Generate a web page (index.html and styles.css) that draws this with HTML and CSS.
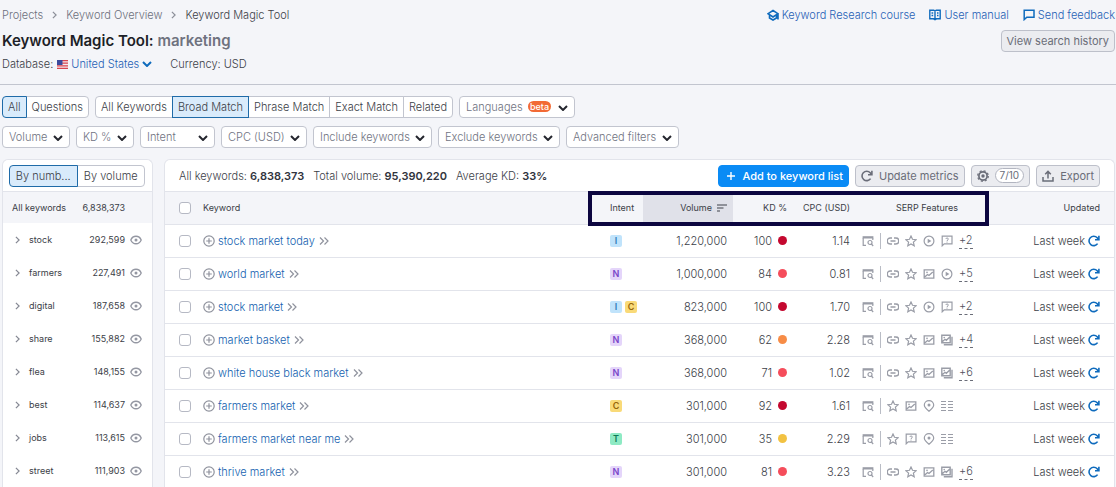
FILE: index.html
```html
<!DOCTYPE html>
<html lang="en">
    <head>
        <meta charset="utf-8">
        <title>Keyword Magic Tool</title>
        <link rel="stylesheet" href="styles.css">
    </head>
    <body>
        <!-- icon sprite -->
        <svg class="sprite" aria-hidden="true">
            <symbol id="i-right" viewBox="0 0 6 10"><path d="M1 1l4 4-4 4" fill="none" stroke="currentColor" stroke-width="1.5"/></symbol>
            <symbol id="i-down" viewBox="0 0 10 6"><path d="M1 1l4 4 4-4" fill="none" stroke="currentColor" stroke-width="2"/></symbol>
            <symbol id="i-double" viewBox="0 0 10 8"><path d="M1 .5L4.500 4 1 7.500M5.500.5L9 4 5.500 7.500" fill="none" stroke="currentColor" stroke-width="1.200"/></symbol>
            <symbol id="i-course" viewBox="0 0 12 12"><path d="M6 1.500L11 4.700 6 8 1 4.700zM2.500 6v3L6 11l3.500-2V6M11 5v5.500" fill="none" stroke="currentColor" stroke-width="1.600"/></symbol>
            <symbol id="i-book" viewBox="0 0 12 12"><path d="M.8 1.200h4L6 2l1.200-.8h4v8.600H7.500L6 10.700 4.500 9.800H.8zM6 2v8.500M2.500 4h1.700M2.500 6.500h1.700M8 4h1.500M8 6.500h1.500" fill="none" stroke="currentColor" stroke-width="1.400"/></symbol>
            <symbol id="i-chat" viewBox="0 0 12 12"><path d="M1.200 10.600V1.200h9.800v7H3.800z" fill="none" stroke="currentColor" stroke-width="1.500"/></symbol>
            <symbol id="i-reload" viewBox="0 0 12 12"><path d="M9.600 8.600A4.700 4.700 0 1 1 9.200 2.800L10.500 4.400M10.900.8v4H7" fill="none" stroke="currentColor" stroke-width="1.600"/></symbol>
            <symbol id="i-gear" viewBox="0 0 12 12"><circle cx="6" cy="6" r="4.100" fill="none" stroke="currentColor" stroke-width="1.700"/><circle cx="6" cy="6" r="5.300" fill="none" stroke="currentColor" stroke-width="1.200" stroke-dasharray="2.100 2.060"/><circle cx="6" cy="6" r="1.700" fill="currentColor"/></symbol>
            <symbol id="i-export" viewBox="0 0 12 12"><path d="M1 7v4h10V7M6 8.500V1.500M3.200 4.200L6 1.400l2.800 2.800" fill="none" stroke="currentColor" stroke-width="1.500"/></symbol>
            <symbol id="i-plus" viewBox="0 0 8 8"><path d="M4 0v8M0 4h8" stroke="currentColor" stroke-width="1.400"/></symbol>
            <symbol id="i-add" viewBox="0 0 12 12"><circle cx="6" cy="6" r="5.200" fill="none" stroke="currentColor" stroke-width="1.200"/><path d="M6 3.200v5.600M3.200 6h5.600" stroke="currentColor" stroke-width="1.200"/></symbol>
            <symbol id="i-eye" viewBox="0 0 12 10"><path d="M.8 5C2.800 0 9.200 0 11.200 5 9.200 10 2.800 10 .8 5z" fill="none" stroke="currentColor" stroke-width="1.300"/><circle cx="6" cy="5" r="1.500" fill="currentColor"/></symbol>
            <symbol id="i-sort" viewBox="0 0 10 8"><path d="M0 1h10M0 4h6.500M0 7h3" stroke="currentColor" stroke-width="1.500"/></symbol>
            <symbol id="i-serp" viewBox="0 0 12 12"><path d="M.6 1.200h10.800v2.300H.6z" fill="currentColor"/><path d="M1.200 3v7.300H4M10.800 3v2" fill="none" stroke="currentColor" stroke-width="1.200"/><circle cx="8" cy="7.500" r="2" fill="none" stroke="currentColor" stroke-width="1.200"/><path d="M9.400 9l1.800 2" stroke="currentColor" stroke-width="1.200"/></symbol>
            <symbol id="i-link" viewBox="0 0 12 12"><path d="M5 3H3.200a3 3 0 0 0 0 6H5M7 3h1.800a3 3 0 0 1 0 6H7M3.500 6h5" fill="none" stroke="currentColor" stroke-width="1.400"/></symbol>
            <symbol id="i-star" viewBox="0 0 12 12"><path d="M6 1l1.500 3.300 3.600.4-2.700 2.400.8 3.600L6 8.900l-3.200 1.800.8-3.600L.9 4.700l3.600-.4z" fill="none" stroke="currentColor" stroke-width="1.200"/></symbol>
            <symbol id="i-video" viewBox="0 0 12 12"><circle cx="6" cy="6" r="4.900" fill="none" stroke="currentColor" stroke-width="1.200"/><path d="M4.700 3.700L8.400 6 4.700 8.300z" fill="currentColor"/></symbol>
            <symbol id="i-faq" viewBox="0 0 12 12"><path d="M1.200 10.800V1.200h9.800v7.600H3.200z" fill="none" stroke="currentColor" stroke-width="1.200"/><path d="M4.800 4c0-1.300 2.600-1.300 2.600 0C7.400 5 6 4.900 6 6M6 6.600v1" fill="none" stroke="currentColor"/></symbol>
            <symbol id="i-image" viewBox="0 0 12 12"><path d="M1.200 1.800h9.600v8.400H1.200zM2 8.800l2.500-2.300 1.500 1L9.800 4" fill="none" stroke="currentColor" stroke-width="1.300"/><circle cx="4" cy="4.400" r=".8" fill="currentColor"/></symbol>
            <symbol id="i-images" viewBox="0 0 12 12"><path d="M.8 1.200h8.400v7.600H.8zM1.500 7.500L4 5.300l1.300 1L8.800 3M11 2.800v8H2.800" fill="none" stroke="currentColor" stroke-width="1.400"/><circle cx="3.200" cy="3.600" r=".8" fill="currentColor"/></symbol>
            <symbol id="i-pin" viewBox="0 0 12 12"><path d="M6 11.300C3 9 1.300 7.300 1.300 5.100a4.700 4.500 0 0 1 9.400 0C10.700 7.300 9 9 6 11.300z" fill="none" stroke="currentColor" stroke-width="1.200"/><circle cx="6" cy="5" r="1.500" fill="currentColor"/></symbol>
            <symbol id="i-list" viewBox="0 0 12 12"><path d="M0 1.500h5M7 1.500h5M0 4.500h5M7 4.500h5M0 7.500h5M7 7.500h5M0 10.500h5M7 10.500h5" stroke="currentColor" stroke-width="1.200"/></symbol>
            <symbol id="i-flag" viewBox="0 0 11 9"><path fill="#f4e9ee" d="M0 0h11v9H0z"/><path d="M0 .6h11M0 3.200h11M0 5.800h11M0 8.400h11" stroke="#d8434f" stroke-width="1.300"/><path fill="#3c4a9c" d="M0 0h5.500v5H0z"/></symbol>
        </svg>

        <header class="page-header">
            <div class="header-left">
                <nav class="breadcrumbs">
                    <a href="#">Projects</a>
                    <svg class="crumb-arrow"><use href="#i-right"/></svg>
                    <a href="#">Keyword Overview</a>
                    <svg class="crumb-arrow"><use href="#i-right"/></svg>
                    <span class="current">Keyword Magic Tool</span>
                </nav>
                <h1>Keyword Magic Tool: <span>marketing</span></h1>
                <div class="settings">
                    <span>Database:</span>
                    <button class="country"><svg class="flag"><use href="#i-flag"/></svg>United States<svg class="chevron"><use href="#i-down"/></svg></button>
                    <span class="currency">Currency: USD</span>
                </div>
            </div>
            <div class="header-right">
                <div class="help-links">
                    <a href="#"><svg class="icon"><use href="#i-course"/></svg>Keyword Research course</a>
                    <a href="#"><svg class="icon"><use href="#i-book"/></svg>User manual</a>
                    <a href="#"><svg class="icon"><use href="#i-chat"/></svg>Send feedback</a>
                </div>
                <button class="btn history-btn">View search history</button>
            </div>
        </header>

        <section class="filters">
            <div class="filter-row">
                <div class="segmented">
                    <button class="active">All</button>
                    <button>Questions</button>
                </div>
                <div class="segmented">
                    <button>All Keywords</button>
                    <button class="active">Broad Match</button>
                    <button>Phrase Match</button>
                    <button>Exact Match</button>
                    <button>Related</button>
                </div>
                <div class="select languages">
                    <select aria-label="Languages"><option>Languages</option></select>
                    <span class="beta">beta</span>
                    <svg class="chevron"><use href="#i-down"/></svg>
                </div>
            </div>
            <div class="filter-row">
                <div class="select"><select aria-label="Volume"><option>Volume</option></select><svg class="chevron"><use href="#i-down"/></svg></div>
                <div class="select"><select aria-label="KD %"><option>KD %</option></select><svg class="chevron"><use href="#i-down"/></svg></div>
                <div class="select intent-filter"><select aria-label="Intent"><option>Intent</option></select><svg class="chevron"><use href="#i-down"/></svg></div>
                <div class="select"><select aria-label="CPC (USD)"><option>CPC (USD)</option></select><svg class="chevron"><use href="#i-down"/></svg></div>
                <div class="select"><select aria-label="Include keywords"><option>Include keywords</option></select><svg class="chevron"><use href="#i-down"/></svg></div>
                <div class="select"><select aria-label="Exclude keywords"><option>Exclude keywords</option></select><svg class="chevron"><use href="#i-down"/></svg></div>
                <div class="select"><select aria-label="Advanced filters"><option>Advanced filters</option></select><svg class="chevron"><use href="#i-down"/></svg></div>
            </div>
        </section>

        <main class="content">
            <aside class="panel groups">
                <div class="panel-head">
                    <div class="segmented">
                        <button class="active">By numb...</button>
                        <button>By volume</button>
                    </div>
                </div>
                <div class="group-total"><span>All keywords</span><span>6,838,373</span></div>
                <ul>
                    <li><svg class="arrow"><use href="#i-right"/></svg><span>stock</span><span>292,599</span><svg class="eye"><use href="#i-eye"/></svg></li>
                    <li><svg class="arrow"><use href="#i-right"/></svg><span>farmers</span><span>227,491</span><svg class="eye"><use href="#i-eye"/></svg></li>
                    <li><svg class="arrow"><use href="#i-right"/></svg><span>digital</span><span>187,658</span><svg class="eye"><use href="#i-eye"/></svg></li>
                    <li><svg class="arrow"><use href="#i-right"/></svg><span>share</span><span>155,882</span><svg class="eye"><use href="#i-eye"/></svg></li>
                    <li><svg class="arrow"><use href="#i-right"/></svg><span>flea</span><span>148,155</span><svg class="eye"><use href="#i-eye"/></svg></li>
                    <li><svg class="arrow"><use href="#i-right"/></svg><span>best</span><span>114,637</span><svg class="eye"><use href="#i-eye"/></svg></li>
                    <li><svg class="arrow"><use href="#i-right"/></svg><span>jobs</span><span>113,615</span><svg class="eye"><use href="#i-eye"/></svg></li>
                    <li><svg class="arrow"><use href="#i-right"/></svg><span>street</span><span>111,903</span><svg class="eye"><use href="#i-eye"/></svg></li>
                </ul>
            </aside>

            <section class="panel results">
                <div class="panel-head">
                    <div class="totals">
                        <span>All keywords: <b>6,838,373</b></span>
                        <span>Total volume: <b>95,390,220</b></span>
                        <span>Average KD: <b>33%</b></span>
                    </div>
                    <div class="actions">
                        <button class="btn primary"><svg class="plus"><use href="#i-plus"/></svg>Add to keyword list</button>
                        <button class="btn"><svg class="icon"><use href="#i-reload"/></svg>Update metrics</button>
                        <button class="btn" aria-label="Columns"><svg class="icon"><use href="#i-gear"/></svg><span class="count">7/10</span></button>
                        <button class="btn"><svg class="icon"><use href="#i-export"/></svg>Export</button>
                    </div>
                </div>
                <div class="table-wrapper">
                    <table>
                        <thead>
                            <tr>
                                <th class="check"><input type="checkbox" aria-label="Select all"></th>
                                <th class="keyword">Keyword</th>
                                <th class="intent">Intent</th>
                                <th class="volume">Volume<svg class="sort"><use href="#i-sort"/></svg></th>
                                <th class="kd">KD %</th>
                                <th class="cpc">CPC (USD)</th>
                                <th class="serp">SERP Features</th>
                                <th class="updated">Updated</th>
                            </tr>
                        </thead>
                        <tbody>
                            <tr>
                                <td class="check"><input type="checkbox" aria-label="stock market today"></td>
                                <td class="keyword"><div><svg class="icon"><use href="#i-add"/></svg><a href="#">stock market today</a><svg class="double"><use href="#i-double"/></svg></div></td>
                                <td class="intent"><div><span class="tag i">I</span></div></td>
                                <td class="volume">1,220,000</td>
                                <td class="kd"><div>100<i class="dot very-hard"></i></div></td>
                                <td class="cpc">1.14</td>
                                <td class="serp"><div><svg class="icon"><use href="#i-serp"/></svg><i class="divider"></i><svg class="icon"><use href="#i-link"/></svg><svg class="icon"><use href="#i-star"/></svg><svg class="icon"><use href="#i-video"/></svg><svg class="icon"><use href="#i-faq"/></svg><span class="more">+2</span></div></td>
                                <td class="updated"><div>Last week<svg class="icon"><use href="#i-reload"/></svg></div></td>
                            </tr>
                            <tr>
                                <td class="check"><input type="checkbox" aria-label="world market"></td>
                                <td class="keyword"><div><svg class="icon"><use href="#i-add"/></svg><a href="#">world market</a><svg class="double"><use href="#i-double"/></svg></div></td>
                                <td class="intent"><div><span class="tag n">N</span></div></td>
                                <td class="volume">1,000,000</td>
                                <td class="kd"><div>84<i class="dot hard"></i></div></td>
                                <td class="cpc">0.81</td>
                                <td class="serp"><div><svg class="icon"><use href="#i-serp"/></svg><i class="divider"></i><svg class="icon"><use href="#i-link"/></svg><svg class="icon"><use href="#i-star"/></svg><svg class="icon"><use href="#i-image"/></svg><svg class="icon"><use href="#i-video"/></svg><span class="more">+5</span></div></td>
                                <td class="updated"><div>Last week<svg class="icon"><use href="#i-reload"/></svg></div></td>
                            </tr>
                            <tr>
                                <td class="check"><input type="checkbox" aria-label="stock market"></td>
                                <td class="keyword"><div><svg class="icon"><use href="#i-add"/></svg><a href="#">stock market</a><svg class="double"><use href="#i-double"/></svg></div></td>
                                <td class="intent"><div><span class="tag i">I</span><span class="tag c">C</span></div></td>
                                <td class="volume">823,000</td>
                                <td class="kd"><div>100<i class="dot very-hard"></i></div></td>
                                <td class="cpc">1.70</td>
                                <td class="serp"><div><svg class="icon"><use href="#i-serp"/></svg><i class="divider"></i><svg class="icon"><use href="#i-link"/></svg><svg class="icon"><use href="#i-star"/></svg><svg class="icon"><use href="#i-video"/></svg><svg class="icon"><use href="#i-faq"/></svg><span class="more">+2</span></div></td>
                                <td class="updated"><div>Last week<svg class="icon"><use href="#i-reload"/></svg></div></td>
                            </tr>
                            <tr>
                                <td class="check"><input type="checkbox" aria-label="market basket"></td>
                                <td class="keyword"><div><svg class="icon"><use href="#i-add"/></svg><a href="#">market basket</a><svg class="double"><use href="#i-double"/></svg></div></td>
                                <td class="intent"><div><span class="tag n">N</span></div></td>
                                <td class="volume">368,000</td>
                                <td class="kd"><div>62<i class="dot difficult"></i></div></td>
                                <td class="cpc">2.28</td>
                                <td class="serp"><div><svg class="icon"><use href="#i-serp"/></svg><i class="divider"></i><svg class="icon"><use href="#i-link"/></svg><svg class="icon"><use href="#i-star"/></svg><svg class="icon"><use href="#i-image"/></svg><svg class="icon"><use href="#i-images"/></svg><span class="more">+4</span></div></td>
                                <td class="updated"><div>Last week<svg class="icon"><use href="#i-reload"/></svg></div></td>
                            </tr>
                            <tr>
                                <td class="check"><input type="checkbox" aria-label="white house black market"></td>
                                <td class="keyword"><div><svg class="icon"><use href="#i-add"/></svg><a href="#">white house black market</a><svg class="double"><use href="#i-double"/></svg></div></td>
                                <td class="intent"><div><span class="tag n">N</span></div></td>
                                <td class="volume">368,000</td>
                                <td class="kd"><div>71<i class="dot hard"></i></div></td>
                                <td class="cpc">1.02</td>
                                <td class="serp"><div><svg class="icon"><use href="#i-serp"/></svg><i class="divider"></i><svg class="icon"><use href="#i-link"/></svg><svg class="icon"><use href="#i-star"/></svg><svg class="icon"><use href="#i-image"/></svg><svg class="icon"><use href="#i-images"/></svg><span class="more">+6</span></div></td>
                                <td class="updated"><div>Last week<svg class="icon"><use href="#i-reload"/></svg></div></td>
                            </tr>
                            <tr>
                                <td class="check"><input type="checkbox" aria-label="farmers market"></td>
                                <td class="keyword"><div><svg class="icon"><use href="#i-add"/></svg><a href="#">farmers market</a><svg class="double"><use href="#i-double"/></svg></div></td>
                                <td class="intent"><div><span class="tag c">C</span></div></td>
                                <td class="volume">301,000</td>
                                <td class="kd"><div>92<i class="dot very-hard"></i></div></td>
                                <td class="cpc">1.61</td>
                                <td class="serp"><div><svg class="icon"><use href="#i-serp"/></svg><i class="divider"></i><svg class="icon"><use href="#i-star"/></svg><svg class="icon"><use href="#i-image"/></svg><svg class="icon"><use href="#i-pin"/></svg><svg class="icon"><use href="#i-list"/></svg></div></td>
                                <td class="updated"><div>Last week<svg class="icon"><use href="#i-reload"/></svg></div></td>
                            </tr>
                            <tr>
                                <td class="check"><input type="checkbox" aria-label="farmers market near me"></td>
                                <td class="keyword"><div><svg class="icon"><use href="#i-add"/></svg><a href="#">farmers market near me</a><svg class="double"><use href="#i-double"/></svg></div></td>
                                <td class="intent"><div><span class="tag t">T</span></div></td>
                                <td class="volume">301,000</td>
                                <td class="kd"><div>35<i class="dot possible"></i></div></td>
                                <td class="cpc">2.29</td>
                                <td class="serp"><div><svg class="icon"><use href="#i-serp"/></svg><i class="divider"></i><svg class="icon"><use href="#i-star"/></svg><svg class="icon"><use href="#i-faq"/></svg><svg class="icon"><use href="#i-pin"/></svg><svg class="icon"><use href="#i-list"/></svg></div></td>
                                <td class="updated"><div>Last week<svg class="icon"><use href="#i-reload"/></svg></div></td>
                            </tr>
                            <tr>
                                <td class="check"><input type="checkbox" aria-label="thrive market"></td>
                                <td class="keyword"><div><svg class="icon"><use href="#i-add"/></svg><a href="#">thrive market</a><svg class="double"><use href="#i-double"/></svg></div></td>
                                <td class="intent"><div><span class="tag n">N</span></div></td>
                                <td class="volume">301,000</td>
                                <td class="kd"><div>81<i class="dot hard"></i></div></td>
                                <td class="cpc">3.23</td>
                                <td class="serp"><div><svg class="icon"><use href="#i-serp"/></svg><i class="divider"></i><svg class="icon"><use href="#i-link"/></svg><svg class="icon"><use href="#i-star"/></svg><svg class="icon"><use href="#i-image"/></svg><svg class="icon"><use href="#i-images"/></svg><span class="more">+6</span></div></td>
                                <td class="updated"><div>Last week<svg class="icon"><use href="#i-reload"/></svg></div></td>
                            </tr>
                        </tbody>
                    </table>
                    <!-- frame over the metric column headings -->
                    <div class="highlight"></div>
                </div>
            </section>
        </main>
    </body>
</html>
```
FILE: styles.css
```css
* {
    box-sizing: border-box;
}

body {
    margin: 0;
    font: 300 11px/16px Inter, "Liberation Sans", sans-serif;
    color: #3b3e47;
    background-color: #f4f5f9;
}

button, select {
    margin: 0;
    font: inherit;
    color: inherit;
    cursor: pointer;
}

a {
    text-decoration: none;
}

svg {
    display: block;
    flex: none;
}

.sprite {
    position: absolute;
    width: 0;
    height: 0;
}

.icon {
    width: 12px;
    height: 12px;
}

.chevron {
    width: 10px;
    height: 6px;
}

/* header */
.page-header {
    display: flex;
    justify-content: space-between;
    padding: 7px 1px 12px 2px;
    border-bottom: 1px solid #c2c5cf;
}

.breadcrumbs {
    display: flex;
    align-items: center;
    gap: 9px;
}

.breadcrumbs a {
    color: #6c707c;
}

.crumb-arrow {
    width: 5px;
    height: 8px;
    color: #8b8e98;
}

h1 {
    margin: 8px 0 5px;
    font-size: 15px;
    line-height: 20px;
    font-weight: 600;
    color: #1d1f27;
}

h1 span {
    color: #6f727f;
}

.settings {
    display: flex;
    align-items: center;
    gap: 4px;
}

.country {
    display: flex;
    align-items: center;
    gap: 3px;
    padding: 0;
    border: none;
    color: #1f5fb5;
    background: none;
}

.country .chevron {
    color: #0f6bbd;
}

.flag {
    width: 11px;
    height: 9px;
}

.currency {
    margin-left: 14px;
}

.header-right {
    display: flex;
    flex-direction: column;
    align-items: flex-end;
    gap: 7px;
}

.help-links {
    display: flex;
    gap: 14px;
}

.help-links a {
    display: flex;
    align-items: center;
    gap: 3px;
    color: #1f5fb5;
}

.help-links svg {
    color: #0f6bbd;
}

.btn {
    display: flex;
    align-items: center;
    gap: 6px;
    height: 22px;
    padding: 0 5px;
    border: 1px solid #bdc0ca;
    border-radius: 4px;
    color: #6a6d78;
    background-color: #ebecf0;
    font-weight: 400;
    white-space: nowrap;
}

.btn:hover {
    background-color: #e0e2e8;
}

.btn.primary {
    padding: 0 5px 0 8px;
    gap: 7px;
    border-color: #0a8bf5;
    color: white;
    background-color: #0a8bf5;
    font-weight: 500;
}

/* filters */
.filters {
    display: flex;
    flex-direction: column;
    gap: 8px;
    padding: 11px 2px;
}

.filter-row {
    display: flex;
    flex-wrap: wrap;
    gap: 6px;
}

.segmented {
    display: flex;
}

.segmented button {
    height: 22px;
    padding: 0 5px;
    border: 1px solid #c2c5cf;
    margin-left: -1px;
    background-color: white;
    white-space: nowrap;
}

.segmented button:first-child {
    margin-left: 0;
    border-radius: 4px 0 0 4px;
}

.segmented button:last-child {
    border-radius: 0 4px 4px 0;
}

.segmented .active {
    position: relative;
    border-color: #1f6ba8;
    background-color: #d9ebfb;
}

.select {
    position: relative;
}

.select select {
    appearance: none;
    width: 100%;
    height: 22px;
    padding: 0 21px 0 6px;
    border: 1px solid #c2c5cf;
    border-radius: 4px;
    color: #6f737f;
    background-color: white;
}

.select .chevron {
    position: absolute;
    right: 7px;
    top: 9px;
    color: #24262e;
    pointer-events: none;
}

.intent-filter {
    width: 75px;
}

.languages select {
    padding-right: 51px;
}

.beta {
    position: absolute;
    right: 24px;
    top: 5px;
    padding: 0 2px;
    border-radius: 6px;
    font-size: 9px;
    line-height: 11px;
    font-weight: 500;
    color: white;
    background-color: #f26a35;
    pointer-events: none;
}

/* panels */
.content {
    display: flex;
    align-items: stretch;
    gap: 11px;
    padding: 0 1px 0 2px;
}

.panel {
    border: 1px solid #e2e4eb;
    border-bottom: none;
    border-radius: 6px 6px 0 0;
    background-color: white;
}

.panel-head {
    display: flex;
    align-items: center;
    justify-content: space-between;
    height: 32px;
    border-bottom: 1px solid #e2e4eb;
}

.groups {
    flex: none;
    width: 151px;
    font-size: 9px;
}

.groups .panel-head {
    padding: 0 7px 0 6px;
    font-size: 11px;
}

.groups .segmented,
.groups .segmented button {
    flex: 1;
}

.group-total {
    display: flex;
    justify-content: space-between;
    align-items: center;
    height: 31px;
    padding: 0 27px 0 9px;
    background-color: #f4f5f9;
    font-weight: 400;
}

.groups ul {
    margin: 0;
    padding: 0;
    list-style: none;
    font-weight: 400;
}

.groups li {
    display: grid;
    grid-template-columns: 5px 1fr auto 12px;
    align-items: center;
    column-gap: 5px;
    height: 33px;
    padding: 0 10px 0 12px;
}

.groups li span:nth-child(2) {
    margin-left: 4px;
}

.arrow {
    width: 5px;
    height: 8px;
    color: #858893;
}

.eye {
    width: 12px;
    height: 10px;
    color: #9497a2;
}

.results {
    flex: 1;
    min-width: 0;
}

.results .panel-head {
    padding: 0 14px;
}

.totals {
    display: flex;
    gap: 9px;
}

.totals b {
    font-weight: 600;
    color: #31343d;
}

.actions {
    display: flex;
    gap: 6px;
}

.plus {
    width: 8px;
    height: 8px;
}

.count {
    padding: 0 4px;
    border: 1px solid #b2b5c0;
    border-radius: 8px;
    font-size: 10px;
    line-height: 13px;
    background-color: white;
}

.table-wrapper {
    position: relative;
}

table {
    width: 100%;
    table-layout: fixed;
    border-collapse: collapse;
}

th {
    height: 32px;
    padding: 0;
    font-size: 9px;
    font-weight: 400;
    text-align: left;
    background-color: #f4f5f9;
}

td {
    height: 33px;
    padding: 0;
}

tr {
    border-bottom: 1px solid #e2e4eb;
}

td div {
    display: flex;
    align-items: center;
}

th.check {
    width: 38px;
}

th.intent {
    width: 41px;
}

th.volume {
    width: 90px;
    background-color: #e0e1e9;
}

th.kd {
    width: 63px;
}

th.cpc {
    width: 64px;
}

th.serp {
    width: 134px;
    text-align: center;
}

th.updated {
    width: 120px;
}

.check {
    padding-left: 14px;
}

.check input {
    display: block;
    appearance: none;
    width: 12px;
    height: 12px;
    margin: 0;
    border: 1px solid #b6b9c4;
    border-radius: 3px;
    background-color: white;
}

.check input:checked {
    background-color: #0a8bf5;
}

.keyword div {
    gap: 3px;
    color: #8f929d;
}

.keyword a {
    color: #145fb0;
}

.double {
    width: 10px;
    height: 8px;
    margin-left: 1px;
}

.intent {
    padding-left: 8px;
}

.intent div {
    gap: 3px;
}

.tag {
    width: 12px;
    border-radius: 2px;
    font-size: 9px;
    line-height: 12px;
    font-weight: 600;
    text-align: center;
}

.tag.i {
    color: #2f7cb8;
    background-color: #c0e3fb;
}

.tag.n {
    color: #7a45c9;
    background-color: #e4d5fa;
}

.tag.c {
    color: #96660a;
    background-color: #f9da78;
}

.tag.t {
    color: #0d7a55;
    background-color: #8eeac4;
}

.volume {
    padding-right: 6px;
    text-align: right;
}

.sort {
    display: inline-block;
    width: 10px;
    height: 8px;
    margin-left: 5px;
    vertical-align: middle;
    color: #74777f;
}

.kd {
    padding-right: 9px;
    text-align: right;
}

.kd div {
    justify-content: flex-end;
    gap: 6px;
}

.dot {
    width: 9px;
    height: 9px;
    border-radius: 50%;
}

.very-hard {
    background-color: #c4082f;
}

.hard {
    background-color: #f54d5b;
}

.difficult {
    background-color: #f78c46;
}

.possible {
    background-color: #f2c242;
}

.cpc {
    padding-right: 10px;
    text-align: right;
}

td.serp {
    padding-left: 2px;
}

.serp div {
    gap: 6px;
    color: #9a9da7;
}

.divider {
    width: 1px;
    height: 16px;
    background-color: #b9bcc5;
}

.more {
    border-bottom: 1px dashed #6a6d78;
    color: #4f525c;
}

.updated {
    padding-right: 14px;
    text-align: right;
}

.updated div {
    justify-content: flex-end;
    gap: 3px;
}

.updated svg {
    color: #0f6bbd;
}

.highlight {
    position: absolute;
    top: -1px;
    right: 125px;
    width: 401px;
    height: 35px;
    border: 4px solid #0c0640;
    pointer-events: none;
}
```
